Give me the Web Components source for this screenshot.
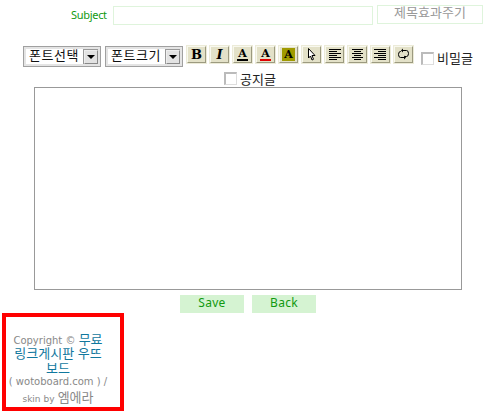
<!DOCTYPE html>
<html lang="ko">
<head>
<meta charset="utf-8">
<title>Write</title>
<style>
    html, body { margin: 0; padding: 0; background: #fff; }
    body { width: 491px; height: 414px; overflow: hidden; font-family: "Noto Sans CJK KR", sans-serif; }
</style>
</head>
<body>
<write-form>
    <subject-row></subject-row>
    <edit-toolbar>
        <font-select label="폰트선택"></font-select>
        <font-select label="폰트크기"></font-select>
        <tool-button><span style="font:900 13px 'DejaVu Serif',serif">B</span></tool-button>
        <tool-button><span style="font:italic 900 13px 'DejaVu Serif',serif">I</span></tool-button>
        <tool-button line="#000"><span style="font:700 11px 'DejaVu Serif',serif">A</span></tool-button>
        <tool-button line="#e00000"><span style="font:700 11px 'DejaVu Serif',serif">A</span></tool-button>
        <tool-button fill="#a09a00"><span style="font:700 11px 'DejaVu Serif',serif">A</span></tool-button>
        <tool-button>
            <svg width="9" height="13" viewBox="0 0 9 13"><path d="M1.5 .5V10L3.5 8 5 12 6.5 11.3 5 7.5H8Z" fill="#fff" stroke="#000"/></svg>
        </tool-button>
        <tool-button>
            <svg width="13" height="13" viewBox="0 0 13 13"><path d="M1 1.5H13M1 3.5H9M1 5.5H13M1 7.5H9M1 9.5H13M1 11.5H9" stroke="#000"/></svg>
        </tool-button>
        <tool-button>
            <svg width="13" height="13" viewBox="0 0 13 13"><path d="M1 1.5H12M3 3.5H10M1 5.5H12M3 7.5H10M1 9.5H12M3 11.5H10" stroke="#000"/></svg>
        </tool-button>
        <tool-button>
            <svg width="13" height="13" viewBox="0 0 13 13"><path d="M0 1.5H12M4 3.5H12M0 5.5H12M4 7.5H12M0 9.5H12M4 11.5H12" stroke="#000"/></svg>
        </tool-button>
        <tool-button>
            <svg width="13" height="13" viewBox="0 0 13 13" fill="none" stroke="#000"><path d="M6 2.5H9.5Q11.5 2.5 11.5 5.5T9.5 8.5H8M7 9.5H3.5Q1.5 9.5 1.5 6.5T3.5 3.5H4"/><path d="M6 .5V4.5L4 2.5ZM7 7.5V11.5L9 9.5Z" fill="#000" stroke="none"/></svg>
        </tool-button>
        <check-label class="secret" text="비밀글"></check-label>
    </edit-toolbar>
    <check-label class="notice" text="공지글"></check-label>
    <memo-box></memo-box>
    <form-actions></form-actions>
    <copy-right></copy-right>
</write-form>

<script>
const writeFormTpl = document.createElement('template');
writeFormTpl.innerHTML = `
<style>
    :host { display: flex; flex-direction: column; width: 491px; }
</style>
<slot></slot>
`;

class WriteForm extends HTMLElement {
    constructor() {
        super();
        this.attachShadow({mode: 'open'}).append(writeFormTpl.content.cloneNode(true));
    }
}

const subjectTpl = document.createElement('template');
subjectTpl.innerHTML = `
<style>
    :host { display: flex; align-items: flex-start; height: 46px; padding: 5px 0 0 71px; box-sizing: border-box; }
    .name { width: 42px; padding-top: 3px; color: #119911; font: 11px/13px "Noto Sans", sans-serif; letter-spacing: -.3px; }
    input { box-sizing: border-box; width: 260px; height: 19px; margin: 1px 4px 0 0; padding: 0; border: 1px solid #dff4dc; background: #fff; outline: none; }
    .effect { box-sizing: border-box; width: 106px; height: 19px; border: 1px solid #dff4dc; color: #999; background: #fff; text-align: center; font: 13px/12px "Noto Sans CJK KR", sans-serif; }
</style>
<span class="name">Subject</span>
<input type="text">
<div class="effect">제목효과주기</div>
`;

class SubjectRow extends HTMLElement {
    constructor() {
        super();
        this.attachShadow({mode: 'open'}).append(subjectTpl.content.cloneNode(true));
    }
}

const toolbarTpl = document.createElement('template');
toolbarTpl.innerHTML = `
<style>
    :host { display: flex; align-items: flex-start; gap: 4px; height: 24px; padding-left: 23px; box-sizing: border-box; }
    ::slotted(check-label) { margin: 5px 0 0 4px; }
</style>
<slot></slot>
`;

class EditToolbar extends HTMLElement {
    constructor() {
        super();
        this.attachShadow({mode: 'open'}).append(toolbarTpl.content.cloneNode(true));
    }
}

const selectTpl = document.createElement('template');
selectTpl.innerHTML = `
<style>
    :host { display: flex; align-items: center; box-sizing: border-box; width: 78px; height: 21px; border: 1px solid #a0a0a0; outline: 2px solid #e4e4e4; outline-offset: -3px; padding: 0 2px 0 5px; background: #fff; }
    span { flex: 1; height: 17px; font: 13px/14px "Noto Sans CJK KR", sans-serif; color: #111; white-space: nowrap; letter-spacing: .5px; }
    i { display: flex; align-items: center; justify-content: center; box-sizing: border-box; width: 14px; height: 14px; background: #e2e2e2; border: 1px solid; border-color: #eee #888 #888 #eee; box-shadow: 0 0 0 1px #999; }
    i::after { content: ""; border: 4px solid transparent; border-top: 4px solid #000; border-bottom: 0; }
</style>
<span></span><i></i>
`;

class FontSelect extends HTMLElement {
    constructor() {
        super();
        const shadow = this.attachShadow({mode: 'open'});
        shadow.append(selectTpl.content.cloneNode(true));
        shadow.querySelector('span').textContent = this.getAttribute('label');
    }
}

const toolBtnTpl = document.createElement('template');
toolBtnTpl.innerHTML = `
<style>
    :host { position: relative; display: flex; align-items: center; justify-content: center; box-sizing: border-box; width: 19px; height: 17px; background: #e3e1c8; border: 1px solid; border-color: #f8f8ee #9c9a80 #9c9a80 #f8f8ee; box-shadow: 0 0 0 1px #ecebd8; color: #000; line-height: 1; overflow: visible; }
    .box { display: flex; align-items: center; justify-content: center; height: 13px; min-width: 13px; }
    .bar { position: absolute; left: 3px; right: 3px; bottom: 1px; height: 2px; }
</style>
<div class="box"><slot></slot></div>
`;

class ToolButton extends HTMLElement {
    constructor() {
        super();
        const shadow = this.attachShadow({mode: 'open'});
        shadow.append(toolBtnTpl.content.cloneNode(true));
        const box = shadow.querySelector('.box');
        if (this.hasAttribute('fill')) {
            box.style.background = this.getAttribute('fill');
        }
        if (this.hasAttribute('line')) {
            box.style.marginBottom = '3px';
            const bar = document.createElement('div');
            bar.className = 'bar';
            bar.style.background = this.getAttribute('line');
            shadow.append(bar);
        }
    }
}

const checkTpl = document.createElement('template');
checkTpl.innerHTML = `
<style>
    :host { display: flex; align-items: center; gap: 3px; height: 14px; color: #222; }
    i { box-sizing: border-box; width: 13px; height: 13px; background: #fff; border: 2px solid #bbb; border-right: 1px solid #ddd; border-bottom: 1px solid #ddd; }
    span { font: 13px/14px "Noto Sans CJK KR", sans-serif; }
    :host(.notice) { align-self: flex-start; height: 17px; margin-left: 224px; }
</style>
<i></i><span></span>
`;

class CheckLabel extends HTMLElement {
    constructor() {
        super();
        const shadow = this.attachShadow({mode: 'open'});
        shadow.append(checkTpl.content.cloneNode(true));
        shadow.querySelector('span').textContent = this.getAttribute('text');
    }
}

const memoTpl = document.createElement('template');
memoTpl.innerHTML = `
<style>
    :host { display: block; padding-left: 34px; height: 203px; }
    textarea { display: block; box-sizing: border-box; width: 428px; height: 203px; margin: 0; padding: 0; border: 1px solid #999; background: #fff; outline: none; resize: none; }
</style>
<textarea></textarea>
`;

class MemoBox extends HTMLElement {
    constructor() {
        super();
        this.attachShadow({mode: 'open'}).append(memoTpl.content.cloneNode(true));
    }
}

const actionsTpl = document.createElement('template');
actionsTpl.innerHTML = `
<style>
    :host { display: flex; gap: 8px; padding: 5px 0 0 180px; height: 23px; box-sizing: border-box; }
    button { box-sizing: border-box; width: 64px; height: 18px; padding: 0 0 2px; border: 0; background: #d5f3d2; color: #119911; font: 12px/16px "Noto Sans", sans-serif; letter-spacing: .3px; }
</style>
<button>Save</button><button>Back</button>
`;

class FormActions extends HTMLElement {
    constructor() {
        super();
        this.attachShadow({mode: 'open'}).append(actionsTpl.content.cloneNode(true));
    }
}

const copyTpl = document.createElement('template');
copyTpl.innerHTML = `
<style>
    :host { display: block; box-sizing: border-box; align-self: flex-start; width: 122px; height: 98px; margin-left: 2px; padding: 15px 10px 0 0; border: 4px solid #ff0000; color: #888; text-align: center; font: 10px/14px "DejaVu Sans", sans-serif; }
    div { height: 14.4px; white-space: nowrap; }
    a { color: #11789e; text-decoration: none; }
    .ko { font-family: "Noto Sans CJK KR", sans-serif; font-size: 13px; line-height: 14px; }
    .sm { font-size: 9px; }
</style>
<div>Copyright © <a class="ko" href="#">무료</a></div>
<div><a class="ko" href="#">링크게시판 우뜨</a></div>
<div><a class="ko" href="#">보드</a></div>
<div>( wotoboard.com ) /</div>
<div><span class="sm">skin by</span> <span class="ko">엠에라</span></div>
`;

class CopyRight extends HTMLElement {
    constructor() {
        super();
        this.attachShadow({mode: 'open'}).append(copyTpl.content.cloneNode(true));
    }
}

customElements.define('write-form', WriteForm);
customElements.define('subject-row', SubjectRow);
customElements.define('edit-toolbar', EditToolbar);
customElements.define('font-select', FontSelect);
customElements.define('tool-button', ToolButton);
customElements.define('check-label', CheckLabel);
customElements.define('memo-box', MemoBox);
customElements.define('form-actions', FormActions);
customElements.define('copy-right', CopyRight);
</script>
</body>
</html>
